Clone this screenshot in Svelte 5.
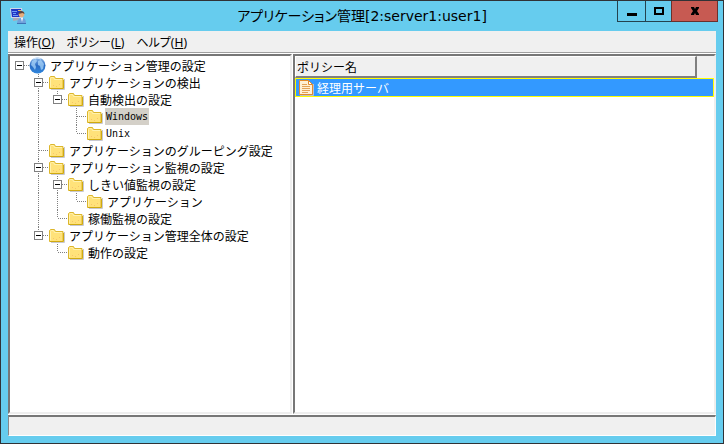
<script lang="ts">
  let selected = $state("Windows");

  let tree = $state({
    label: "アプリケーション管理の設定",
    open: true,
    children: [
      {
        label: "アプリケーションの検出",
        open: true,
        children: [
          {
            label: "自動検出の設定",
            open: true,
            children: [
              { label: "Windows", latin: true },
              { label: "Unix", latin: true },
            ],
          },
        ],
      },
      { label: "アプリケーションのグルーピング設定" },
      {
        label: "アプリケーション監視の設定",
        open: true,
        children: [
          {
            label: "しきい値監視の設定",
            open: true,
            children: [{ label: "アプリケーション" }],
          },
          { label: "稼働監視の設定" },
        ],
      },
      {
        label: "アプリケーション管理全体の設定",
        open: true,
        children: [{ label: "動作の設定" }],
      },
    ],
  });

  const menus = [
    { label: "操作", key: "O" },
    { label: "ポリシー", key: "L" },
    { label: "ヘルプ", key: "H" },
  ];

  const policies = ["経理用サーバ"];

  // guides holds one flag per ancestor column: does its line continue below?
  const flatten = (node, guides = [], last = true, level = 0) => {
    const rows = [{ node, guides, last, level }];
    if (node.children && node.open) {
      const next = level === 0 ? [false] : [...guides, !last];
      node.children.forEach((child, i) => {
        rows.push(...flatten(child, next, i === node.children.length - 1, level + 1));
      });
    }
    return rows;
  };

  let rows = $derived(flatten(tree));
</script>

<div class="window">
  <header class="titlebar">
    <svg class="app-icon" width="18" height="18" viewBox="0 0 18 18">
      <path d="M1 1h12l1 10H2z" fill="#cfd6e8" />
      <path d="M2 2h10l1 8H3z" fill="#1f35c4" />
      <path d="M3 4.5h5M4 6.5h3M4 8.5h5" stroke="#6f9bf5" />
      <path d="M9 3.5h3" stroke="#e8c25c" />
      <path d="M4 11h6v2l-6 1z" fill="#a9a9b4" />
      <path d="M8 17c0-4 2-6 5-6s4 2 4 6z" fill="#6fa2dc" />
      <path d="M8 16.5h9" stroke="#3f72b5" />
      <circle cx="12.5" cy="7.5" r="2.8" fill="#e5ad7c" />
      <path d="M9.5 7c0-4 6-4 6 0l-2-1z" fill="#5d4438" />
      <path d="M12 11l1 4 1-4z" fill="#fff" />
    </svg>
    <h1>アプリケーション管理[2:server1:user1]</h1>
    <div class="controls">
      <button class="minimize" aria-label="最小化">
        <svg width="12" height="12" viewBox="0 0 12 12"><path d="M1 8h10v3H1z" /></svg>
      </button>
      <button class="maximize" aria-label="最大化">
        <svg width="12" height="12" viewBox="0 0 12 12">
          <path d="M1 2h10v8H1zM3 4v4h6V4z" fill-rule="evenodd" />
        </svg>
      </button>
      <button class="close" aria-label="閉じる">
        <svg width="12" height="12" viewBox="0 0 12 12">
          <path d="M2 2h3l1 2 1-2h3v1L8 6l2 3v1H7L6 8l-1 2H2V9l2-3-2-3z" />
        </svg>
      </button>
    </div>
  </header>

  <div class="client">
    <nav class="menu">
      {#each menus as menu}
        <button>{menu.label}(<u>{menu.key}</u>)</button>
      {/each}
    </nav>

    <main>
      <ul class="pane tree" role="tree">
        {#each rows as row}
          <li
            role="treeitem"
            aria-level={row.level + 1}
            aria-expanded={row.node.children ? row.node.open : undefined}
            aria-selected={selected === row.node.label}
          >
            {#each row.guides as line}
              <svg class="guide" viewBox="0 0 19 17">
                {#if line}<path d="M9.5 0v17" />{/if}
              </svg>
            {/each}
            {#if row.node.children}
              <button class="toggle" aria-label="展開" onclick={() => (row.node.open = !row.node.open)}>
                <svg class="guide" viewBox="0 0 19 17">
                  {#if row.level > 0}<path d={row.last ? "M9.5 0v8" : "M9.5 0v17"} />{/if}
                  <path d="M14 8.5h5" />
                  <rect x="5.5" y="4.5" width="8" height="8" />
                  <path class="sign" d={row.node.open ? "M7 8.5h5" : "M7 8.5h5M9.5 6v5"} />
                </svg>
              </button>
            {:else}
              <svg class="guide" viewBox="0 0 19 17">
                <path d={row.last ? "M9.5 0v8" : "M9.5 0v17"} />
                <path d="M10 8.5h9" />
              </svg>
            {/if}
            {#if row.level === 0}
              <svg class="icon" viewBox="0 0 17 17">
                <defs>
                  <linearGradient id="globe" x1="0" y1="0" x2="0" y2="1">
                    <stop offset="0" stop-color="#8db9ea" />
                    <stop offset="0.5" stop-color="#2b6cc4" />
                    <stop offset="1" stop-color="#2f86dc" />
                  </linearGradient>
                </defs>
                <circle cx="8.5" cy="8.5" r="8" fill="url(#globe)" />
                <path d="M3 4l4-2 1 2-2 3 1 3-1 3-2-3-2-2zM9 4l3-1 3 4-1 5-2 1-1-4-2-1z" fill="#a9d6fa" opacity="0.75" />
                <path d="M4 2q4-2 8 0" fill="none" stroke="#d7e9fb" />
              </svg>
            {:else}
              <svg class="icon" viewBox="0 0 17 17">
                <path d="M3 15.5h13.5V5" fill="none" stroke="#c8c8d0" />
                <path d="M1.5 14.5v-11l1-1h4l1 2h7.5v10z" fill="#ffe27a" stroke="#dcb62c" />
                <path d="M2.5 13.5v-9l1-1h2l1 2h7.5" fill="none" stroke="#fff2ae" />
                <path d="M2 14.5h13.5V6" fill="none" stroke="#d0aa10" />
                <path d="M5 11.5h1M8 12.5h1M11 10.5h1" stroke="#f7c46c" />
              </svg>
            {/if}
            <button
              class="label"
              class:latin={row.node.latin}
              class:selected={selected === row.node.label}
              onclick={() => (selected = row.node.label)}
            >
              {row.node.label}
            </button>
          </li>
        {/each}
      </ul>

      <section class="pane list">
        <table>
          <thead>
            <tr>
              <th>ポリシー名</th>
              <th class="rest" aria-label="余白"></th>
            </tr>
          </thead>
          <tbody>
            {#each policies as policy}
              <tr>
                <td colspan="2">
                  <div class="policy">
                    <svg width="16" height="17" viewBox="0 0 16 17">
                      <path d="M2 16.5h13.5V5" fill="none" stroke="#b9c0cb" />
                      <path d="M1.5 1.5h9l4 4v10h-13z" fill="#fff0d5" stroke="#e28b2d" />
                      <path d="M10.5 1.5v4h4z" fill="#fff" stroke="#e28b2d" />
                      <path d="M4 5.5h5M4 7.5h8M4 9.5h8M4 11.5h8M4 13.5h6" stroke="#e3a258" />
                    </svg>
                    <span>{policy}</span>
                  </div>
                </td>
              </tr>
            {/each}
          </tbody>
        </table>
      </section>
    </main>

    <footer></footer>
  </div>
</div>

<style>
  :global(body) {
    margin: 0;
  }
  .window {
    display: flex;
    flex-direction: column;
    box-sizing: border-box;
    height: 100vh;
    padding: 0 7px 7px;
    border: 1px solid #303236;
    background: #66ccee;
    font-family: "Noto Sans CJK JP", sans-serif;
    font-size: 12px;
    color: #000;
  }
  button {
    padding: 0;
    border: none;
    background: none;
    font: inherit;
    color: inherit;
  }
  svg {
    display: block;
    flex: none;
  }

  .titlebar {
    display: grid;
    grid-template-columns: 1fr auto 1fr;
    height: 30px;
  }
  .app-icon {
    margin: 6px 0 0 1px;
  }
  h1 {
    margin: 0;
    font-family: "DejaVu Sans", "Noto Sans CJK JP", sans-serif;
    font-size: 14px;
    font-weight: 400;
    line-height: 30px;
    font-feature-settings: "palt";
  }
  .controls {
    display: flex;
    justify-content: flex-end;
    height: 21px;
    margin-right: -2px;
  }
  .controls button {
    display: flex;
    align-items: center;
    justify-content: center;
    box-sizing: border-box;
    width: 28px;
    border: 1px solid #24424e;
    border-top: none;
    border-right: none;
  }
  .controls .maximize {
    width: 26px;
  }
  .controls .close {
    width: 47px;
    border: 1px solid #6a302c;
    border-top: none;
    background: #c75a52;
  }

  .client {
    display: flex;
    flex: 1;
    flex-direction: column;
    min-height: 0;
    background: #f0f0f0;
  }
  .menu {
    display: flex;
    gap: 12px;
    height: 21px;
    padding-left: 6px;
    border-bottom: 1px solid #a0a0a0;
    font-family: "Noto Sans", "Noto Sans CJK JP", sans-serif;
    font-feature-settings: "palt";
  }
  u {
    text-underline-offset: 1px;
  }

  main {
    display: grid;
    grid-template-columns: 284px 1fr;
    gap: 1px;
    flex: 1;
    min-height: 0;
    padding: 1px 0;
    background: #fff;
  }
  .pane {
    box-sizing: border-box;
    min-width: 0;
    border: 2px solid;
    border-color: #777 #eee #eee #777;
    background: #fff;
    overflow: hidden;
  }
  .tree {
    margin: 0;
    padding: 1px 0 0;
    list-style: none;
  }
  .tree li {
    display: flex;
    align-items: center;
    height: 17px;
  }
  .guide {
    width: 19px;
    height: 17px;
    fill: none;
    stroke: #808080;
  }
  .guide path {
    stroke-dasharray: 1 1;
  }
  .guide rect {
    fill: #fff;
  }
  .guide .sign {
    stroke: #000;
    stroke-dasharray: none;
  }
  .icon {
    width: 17px;
    height: 17px;
  }
  .label {
    margin-left: 2px;
    padding: 0 2px;
    line-height: 17px;
    white-space: nowrap;
  }
  .label.latin {
    padding: 0 1px;
    font-family: "DejaVu Sans Mono", monospace;
    font-size: 10px;
  }
  .label.selected {
    background: #d4d0c8;
  }

  table {
    width: 100%;
    border-collapse: separate;
    border-spacing: 0;
  }
  th {
    box-sizing: border-box;
    height: 22px;
    padding: 0 1px;
    border: solid;
    border-width: 1px 2px 2px 1px;
    border-color: #fff #808080 #808080 #fff;
    background: #f0f0f0;
    font-weight: 400;
    line-height: 18px;
    text-align: left;
  }
  .rest {
    width: 17px;
    border-color: #f0f0f0;
  }
  td {
    padding: 0;
    border: 1px solid #ffff00;
    background: #3399ff;
    color: #fff;
  }
  .policy {
    display: flex;
    align-items: center;
    gap: 3px;
    height: 17px;
    padding-left: 2px;
  }

  footer {
    box-sizing: border-box;
    height: 21px;
    border: 1px solid #fff;
    border-top: 2px solid #777;
    border-left-color: #888;
  }
</style>
